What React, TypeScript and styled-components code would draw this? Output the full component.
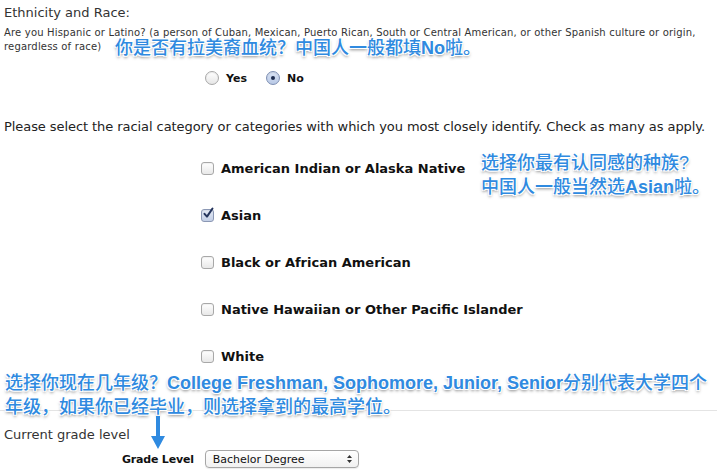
import * as React from 'react';
import styled, { createGlobalStyle } from 'styled-components';

const GlobalStyle = createGlobalStyle`
  html, body {
    margin: 0;
    padding: 0;
    background: #fff;
  }
  body {
    font-family: 'DejaVu Sans', Verdana, sans-serif;
    color: #222;
  }
`;

const Page = styled.div`
  position: relative;
  width: 717px;
  height: 476px;
  overflow: hidden;
  padding: 4px 4px 0 4px;
  box-sizing: border-box;
`;

const Heading = styled.div`
  font-size: 13px;
  line-height: 17px;
  color: #333;
`;

const Question = styled.div`
  font-size: 10px;
  line-height: 14px;
  letter-spacing: 0.18px;
  color: #333;
  margin-top: 5px;
`;

const RadioRow = styled.div`
  display: flex;
  align-items: center;
  margin: 16px 0 0 201px;
  gap: 7px;
  height: 16px;
`;

const RadioBox = styled.span<{ $on?: boolean }>`
  width: 12px;
  height: 12px;
  border-radius: 50%;
  border: 1px solid ${p => (p.$on ? '#7d8fb3' : '#a8a8a8')};
  background: ${p =>
    p.$on
      ? 'linear-gradient(#d9e3f4, #b9c9e6)'
      : 'linear-gradient(#ffffff, #e6e6e6)'};
  display: inline-flex;
  align-items: center;
  justify-content: center;
  box-shadow: inset 0 1px 1px rgba(0, 0, 0, 0.08);
  &::after {
    content: '';
    display: ${p => (p.$on ? 'block' : 'none')};
    width: 4px;
    height: 4px;
    border-radius: 50%;
    background: #1d2c4f;
  }
`;

const OptionLabel = styled.span<{ $size?: number }>`
  font-weight: bold;
  font-size: ${p => p.$size ?? 11}px;
  color: #111;
  margin-right: 12px;
`;

const Prompt = styled.div`
  font-size: 13px;
  line-height: 17px;
  letter-spacing: -0.07px;
  color: #222;
  margin-top: 32px;
  white-space: nowrap;
`;

const CheckList = styled.div`
  display: flex;
  flex-direction: column;
  margin: 10px 0 0 197px;
`;

const CheckRow = styled.div`
  display: flex;
  align-items: center;
  gap: 7px;
  height: 47px;
`;

const CheckBox = styled.span<{ $on?: boolean }>`
  width: 11px;
  height: 11px;
  border-radius: 3px;
  border: 1px solid ${p => (p.$on ? '#8b98b4' : '#a8a8a8')};
  background: ${p =>
    p.$on
      ? 'linear-gradient(#e3e9f5, #c3cfe6)'
      : 'linear-gradient(#ffffff, #e8e8e8)'};
  position: relative;
  box-shadow: inset 0 1px 1px rgba(0, 0, 0, 0.06);
  svg {
    position: absolute;
    left: 0;
    top: -3px;
  }
`;

const Divider = styled.div`
  height: 1px;
  background: #e4e4e4;
  margin: 30px -4px 0 -4px;
`;

const GradeTitle = styled.div`
  font-size: 13px;
  line-height: 17px;
  color: #333;
  margin-top: 15px;
`;

const GradeRow = styled.div`
  display: flex;
  align-items: center;
  margin: 7px 0 0 118px;
  gap: 11px;
`;

const GradeLabel = styled.span`
  font-weight: bold;
  font-size: 11px;
  letter-spacing: -0.2px;
  color: #111;
`;

const FakeSelect = styled.div`
  width: 154px;
  height: 18px;
  box-sizing: border-box;
  border: 1px solid #a6a6a6;
  border-radius: 4px;
  background: linear-gradient(#ffffff, #f1f1f1);
  display: flex;
  align-items: center;
  justify-content: space-between;
  padding: 0 5px 0 7px;
  font-size: 11px;
  color: #111;
  box-shadow: 0 1px 1px rgba(0, 0, 0, 0.08);
`;

const Note = styled.div<{ $x: number; $y: number }>`
  position: absolute;
  left: ${p => p.$x}px;
  top: ${p => p.$y}px;
  font-family: 'Liberation Sans', 'Noto Sans CJK SC', sans-serif;
  font-size: 18px;
  line-height: 24px;
  font-weight: 500;
  color: #2f8ae0;
  white-space: nowrap;
  text-shadow: -1px -1px 0 #fff, 1px -1px 0 #fff, -1px 1px 0 #fff,
    1px 1px 0 #fff, 0 2px 3px rgba(0, 0, 0, 0.5);
  b {
    font-weight: bold;
  }
`;

const ArrowWrap = styled.div`
  position: absolute;
  left: 150px;
  top: 416px;
`;

const Check = () => (
  <svg width="13" height="13" viewBox="0 0 13 13">
    <path
      d="M2.5 6.8 L5 9.6 L10.5 1.5"
      fill="none"
      stroke="#24345c"
      strokeWidth="2"
      strokeLinecap="round"
      strokeLinejoin="round"
    />
  </svg>
);

const races = [
  { label: 'American Indian or Alaska Native', on: false },
  { label: 'Asian', on: true },
  { label: 'Black or African American', on: false },
  { label: 'Native Hawaiian or Other Pacific Islander', on: false },
  { label: 'White', on: false },
];

export default function App() {
  return (
    <>
      <GlobalStyle />
      <Page>
        <Heading>Ethnicity and Race:</Heading>
        <Question>
          Are you Hispanic or Latino? (a person of Cuban, Mexican, Puerto Rican,
          South or Central American, or other Spanish culture or origin,
          <br />
          regardless of race)
        </Question>
        <RadioRow>
          <RadioBox />
          <OptionLabel>Yes</OptionLabel>
          <RadioBox $on />
          <OptionLabel>No</OptionLabel>
        </RadioRow>

        <Prompt>
          Please select the racial category or categories with which you most
          closely identify. Check as many as apply.
        </Prompt>
        <CheckList>
          {races.map(r => (
            <CheckRow key={r.label}>
              <CheckBox $on={r.on}>{r.on && <Check />}</CheckBox>
              <OptionLabel $size={13}>{r.label}</OptionLabel>
            </CheckRow>
          ))}
        </CheckList>

        <Divider />
        <GradeTitle>Current grade level</GradeTitle>
        <GradeRow>
          <GradeLabel>Grade Level</GradeLabel>
          <FakeSelect>
            <span>Bachelor Degree</span>
            <svg width="7" height="10" viewBox="0 0 7 10">
              <path d="M1 4 L3.5 1 L6 4 Z M1 6 L3.5 9 L6 6 Z" fill="#333" />
            </svg>
          </FakeSelect>
        </GradeRow>

        <Note $x={115} $y={36}>
          你是否有拉美裔血统？中国人一般都填<b>No</b>啦。
        </Note>
        <Note $x={481} $y={151}>
          选择你最有认同感的种族?
          <br />
          中国人一般当然选<b>Asian</b>啦。
        </Note>
        <Note $x={5} $y={371}>
          选择你现在几年级？<b>College Freshman, Sophomore, Junior, Senior</b>
          分别代表大学四个
          <br />
          年级，如果你已经毕业，则选择拿到的最高学位。
        </Note>
        <ArrowWrap>
          <svg width="16" height="34" viewBox="0 0 16 34">
            <path d="M6 0 H10 V20 H15 L8 33 L1 20 H6 Z" fill="#2f8ae0" />
          </svg>
        </ArrowWrap>
      </Page>
    </>
  );
}
